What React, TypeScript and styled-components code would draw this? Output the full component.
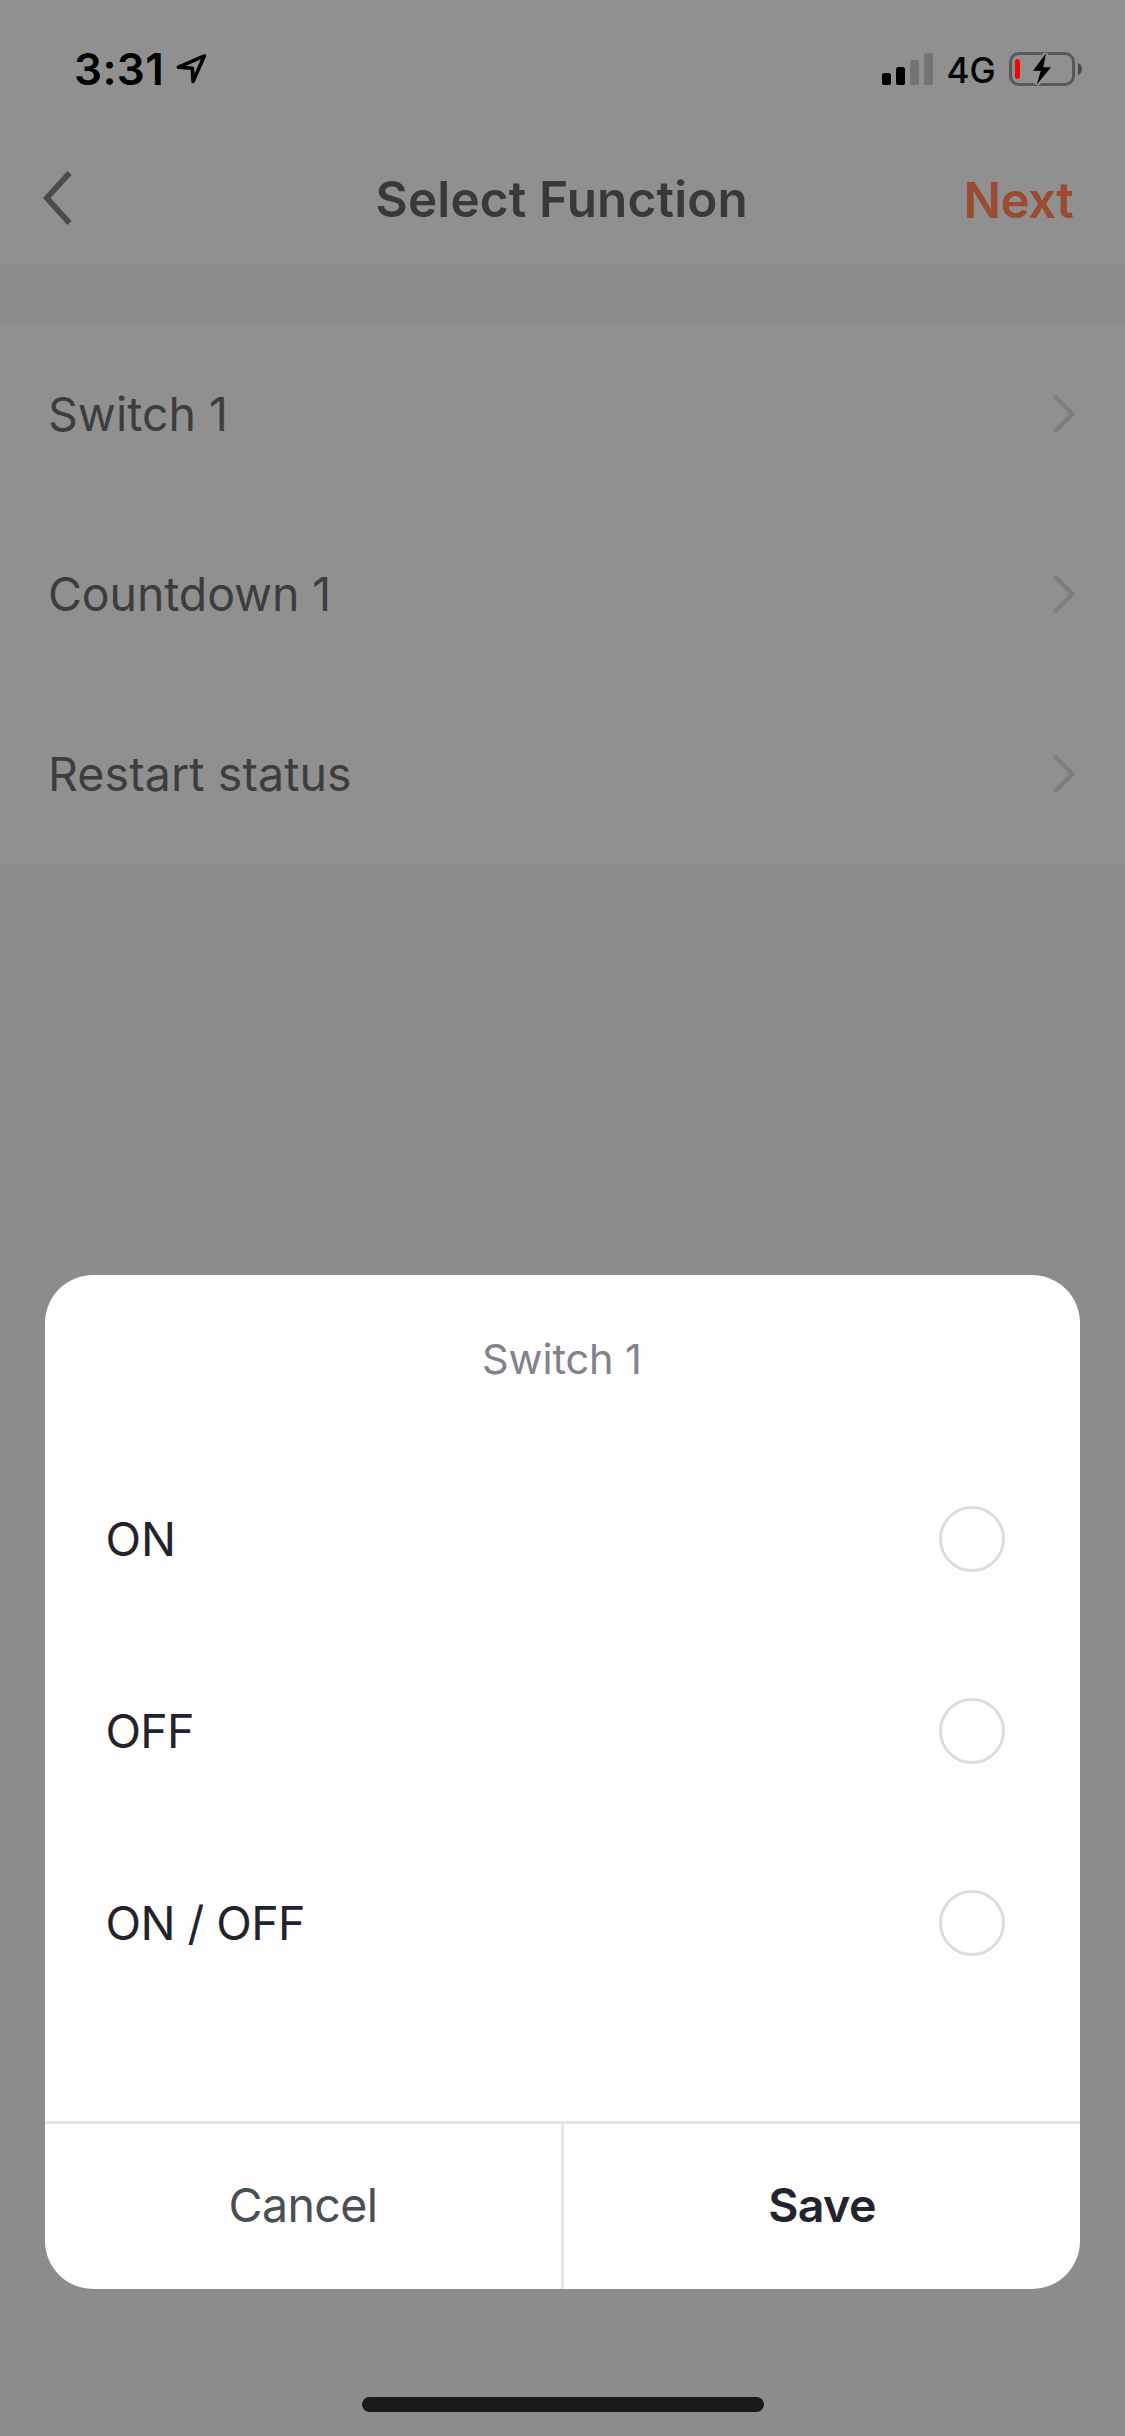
import React, { useState } from "react";
import styled, { createGlobalStyle } from "styled-components";

const GlobalStyle = createGlobalStyle`
  *, *::before, *::after {
    box-sizing: border-box;
  }
  body {
    margin: 0;
    background: #8c8c8c;
    font-family: Inter, "Liberation Sans", sans-serif;
  }
  button {
    margin: 0;
    padding: 0;
    border: 0;
    background: none;
    font: inherit;
    color: inherit;
  }
`;

const Screen = styled.main`
  position: relative;
  display: flex;
  flex-direction: column;
  width: 1125px;
  height: 2436px;
  overflow: hidden;
  background: #8c8c8c;
`;

const Header = styled.header`
  height: 264px;
  background: #909090;
`;

const StatusBar = styled.div`
  display: flex;
  justify-content: space-between;
  align-items: center;
  height: 138px;
  padding: 0 43px 0 74px;
  color: #000;
`;

const StatusGroup = styled.div<{ $gap: number }>`
  display: flex;
  align-items: center;
  gap: ${(p) => p.$gap}px;
`;

const Clock = styled.span`
  font-size: 44px;
  font-weight: 600;
  line-height: 54px;
  letter-spacing: 0.4px;
`;

const Network = styled.span`
  padding-top: 2px;
  font-size: 35px;
  font-weight: 500;
  line-height: 42px;
`;

const NavBar = styled.nav`
  display: grid;
  grid-template-columns: 1fr auto 1fr;
  align-items: center;
  height: 122px;
  padding: 0 52px 0 41.5px;
`;

const BackButton = styled.button`
  display: flex;
  justify-self: start;
  padding-bottom: 2px;
`;

const Title = styled.h1`
  margin: 0 0 0 9px;
  font-size: 49.5px;
  font-weight: 600;
  line-height: 60px;
  letter-spacing: 0.15px;
  color: #38393c;
`;

const NextButton = styled.button`
  justify-self: end;
  padding-top: 2px;
  font-size: 49.5px;
  font-weight: 600;
  line-height: 60px;
  letter-spacing: -0.7px;
  color: #9a4b31;
`;

const FunctionList = styled.ul`
  margin: 60px 0 0;
  padding: 0;
  list-style: none;
  background: #909090;
`;

const FunctionRow = styled.li`
  display: flex;
  justify-content: space-between;
  align-items: center;
  height: 180px;
  padding: 0 49px 0 48px;
`;

const FunctionName = styled.span<{ $tracking: number }>`
  font-size: 46.5px;
  line-height: 60px;
  letter-spacing: ${(p) => p.$tracking}px;
  color: #3d3d3d;
`;

const Dialog = styled.section`
  position: absolute;
  top: 1275px;
  left: 45px;
  right: 45px;
  display: flex;
  flex-direction: column;
  height: 1014px;
  border-radius: 48px;
  overflow: hidden;
  background: #fefefe;
`;

const DialogTitle = styled.h2`
  margin: 0;
  padding-right: 1px;
  font-size: 41.5px;
  font-weight: 400;
  line-height: 168px;
  letter-spacing: -0.1px;
  text-align: center;
  color: #81828b;
`;

const Options = styled.div`
  flex: 1;
`;

const Option = styled.label`
  display: flex;
  justify-content: space-between;
  align-items: center;
  height: 192px;
  padding: 0 75px 0 60.5px;
`;

const OptionName = styled.span<{ $tracking: number }>`
  font-size: 46.5px;
  line-height: 60px;
  letter-spacing: ${(p) => p.$tracking}px;
  color: #22232d;
`;

const Radio = styled.input`
  appearance: none;
  width: 66px;
  height: 66px;
  margin: 0;
  border: 3px solid #dbdddc;
  border-radius: 50%;
  &:checked {
    border: 18px solid #ff5a28;
  }
`;

const Actions = styled.footer`
  display: grid;
  grid-template-columns: 1fr 3px 1fr;
  height: 168px;
  border-top: 3px solid #e3e5e4;
`;

const Divider = styled.div`
  background: #e3e5e4;
`;

const Action = styled.button<{ $primary?: boolean }>`
  padding-bottom: 3px;
  font-size: 46.5px;
  font-weight: ${(p) => (p.$primary ? 600 : 400)};
  letter-spacing: -0.6px;
  color: ${(p) => (p.$primary ? "#22232d" : "#495054")};
`;

const HomeIndicator = styled.div`
  align-self: center;
  width: 402px;
  height: 15px;
  margin: auto 0 24px;
  border-radius: 8px;
  background: #191919;
`;

const LocationIcon = () => (
  <svg width="32" height="32" viewBox="0 0 32 32" fill="none">
    <path
      d="M28.400 2.800 2.400 14.200 16.400 15.200 17 28.400Z"
      stroke="#000"
      strokeWidth="3.600"
      strokeLinejoin="round"
    />
  </svg>
);

const SignalIcon = () => (
  <svg width="51" height="32" viewBox="0 0 51 32">
    <rect x="0" y="20" width="9" height="12" rx="2.600" fill="#000" />
    <rect x="14" y="14" width="9" height="18" rx="2.600" fill="#000" />
    <rect x="28" y="7" width="9" height="25" rx="2.600" fill="#747474" />
    <rect x="42" y="0" width="9" height="32" rx="2.600" fill="#747474" />
  </svg>
);

const BatteryIcon = () => (
  <svg width="73" height="34" viewBox="0 0 73 34">
    <rect
      x="1.500"
      y="1.500"
      width="63"
      height="31"
      rx="8.500"
      fill="none"
      stroke="#595959"
      strokeWidth="3"
    />
    <path d="M69 11c5.300 2 5.300 10 0 12Z" fill="#484848" />
    <rect x="6" y="7" width="5" height="20" rx="2.500" fill="#ff0000" />
    <path
      d="M37 1.300 24 18.800H31.800L27.700 32.700 42 15.300H34.300Z"
      fill="#000"
      stroke="#909090"
      strokeWidth="4.500"
      paintOrder="stroke"
    />
  </svg>
);

const BackIcon = () => (
  <svg width="30" height="54" viewBox="0 0 30 54" fill="none">
    <path d="M27.500 2 4.700 27 27.500 52" stroke="#484c4e" strokeWidth="5.600" />
  </svg>
);

const ChevronIcon = () => (
  <svg width="23" height="40" viewBox="0 0 23 40" fill="none">
    <path d="M1.500 2 19.500 20 1.500 38" stroke="#7c7f81" strokeWidth="4.200" />
  </svg>
);

const functions = [
  { name: "Switch 1", tracking: 0 },
  { name: "Countdown 1", tracking: -0.15 },
  { name: "Restart status", tracking: 0.1 },
];

const options = [
  { name: "ON", tracking: 0 },
  { name: "OFF", tracking: -0.8 },
  { name: "ON / OFF", tracking: -0.57 },
];

export default function App() {
  const [selected, setSelected] = useState<string | null>(null);

  return (
    <>
      <GlobalStyle />
      <Screen>
        <Header>
          <StatusBar>
            <StatusGroup $gap={12}>
              <Clock>3:31</Clock>
              <LocationIcon />
            </StatusGroup>
            <StatusGroup $gap={13.4}>
              <SignalIcon />
              <Network>4G</Network>
              <BatteryIcon />
            </StatusGroup>
          </StatusBar>
          <NavBar>
            <BackButton aria-label="Back">
              <BackIcon />
            </BackButton>
            <Title>Select Function</Title>
            <NextButton>Next</NextButton>
          </NavBar>
        </Header>
        <FunctionList>
          {functions.map((f) => (
            <FunctionRow key={f.name}>
              <FunctionName $tracking={f.tracking}>{f.name}</FunctionName>
              <ChevronIcon />
            </FunctionRow>
          ))}
        </FunctionList>
        <HomeIndicator />
        <Dialog role="dialog" aria-modal="true">
          <DialogTitle>Switch 1</DialogTitle>
          <Options>
            {options.map((o) => (
              <Option key={o.name}>
                <OptionName $tracking={o.tracking}>{o.name}</OptionName>
                <Radio
                  type="radio"
                  name="switch-1"
                  checked={selected === o.name}
                  onChange={() => setSelected(o.name)}
                />
              </Option>
            ))}
          </Options>
          <Actions>
            <Action>Cancel</Action>
            <Divider />
            <Action $primary>Save</Action>
          </Actions>
        </Dialog>
      </Screen>
    </>
  );
}
